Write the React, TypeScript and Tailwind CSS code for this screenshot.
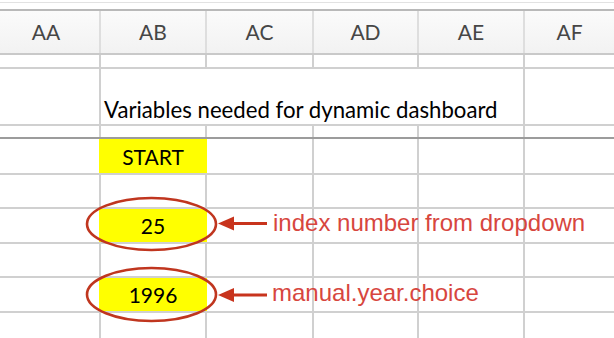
import React from "react";

const W = ["w-[101px]", "w-[106px]", "w-[107px]", "w-[105px]", "w-[106px]", "flex-1"];
const LINE = "border-[#d0d0d0]";

function Row({ h, dark, children }: { h: string; dark?: boolean; children: React.ReactNode }) {
  return (
    <div className={`flex ${h} border-b-2 ${dark ? "border-[#9c9c9c]" : LINE}`}>{children}</div>
  );
}

function Cell({ i, yellow, yellowEdge, children }: { i: number; yellow?: boolean; yellowEdge?: boolean; children?: React.ReactNode }) {
  const last = i === 5;
  const border = last ? "" : `border-r-2 ${yellowEdge || yellow ? "border-[#ffff00]" : LINE}`;
  return (
    <div
      className={`${W[i]} shrink-0 ${border} ${yellow ? "bg-[#ffff00]" : ""} flex items-center justify-center text-black`}
    >
      {children}
    </div>
  );
}

function Blank() {
  return (
    <>
      {[0, 1, 2, 3, 4, 5].map((i) => (
        <Cell key={i} i={i} />
      ))}
    </>
  );
}

function YellowRow({ label }: { label: string }) {
  return (
    <>
      <Cell i={0} yellowEdge />
      <Cell i={1} yellow>
        <span className="pt-[1px]">{label}</span>
      </Cell>
      <Cell i={2} />
      <Cell i={3} />
      <Cell i={4} />
      <Cell i={5} />
    </>
  );
}

export default function App() {
  const headers = ["AA", "AB", "AC", "AD", "AE", "AF"];
  return (
    <div
      className="relative w-[614px] h-[338px] overflow-hidden bg-white"
      style={{ fontFamily: "Lato, 'Open Sans', sans-serif" }}
    >
      {/* top strip */}
      <div className="h-[2px] bg-white" />
      <div className="h-px bg-[#e2e2e2]" />
      <div className="h-[6px] bg-white" />
      <div className="h-[2px] bg-[#b9b9b9]" />
      {/* header */}
      <div className="flex h-[44px] border-b-2 border-[#c9c9c9] bg-gradient-to-b from-[#fbfbfb] to-[#f2f2f2]">
        {headers.map((t, i) => (
          <div
            key={t}
            className={`${W[i]} shrink-0 ${i === 5 ? "" : "border-r-2 border-[#dedede]"} flex items-center justify-center ${i === 0 ? "pr-[7px]" : ""} text-[21px] text-[#464646]`}
          >
            {t}
          </div>
        ))}
      </div>
      <Row h="h-[14px]">
        <Blank />
      </Row>
      <Row h="h-[57px]">
        <Cell i={0} />
        <div className="w-[424px] shrink-0 border-r-2 border-[#d0d0d0] flex items-end pl-[3px] pb-[1px]">
          <span className="text-[22.2px] leading-[26px] whitespace-nowrap text-black">
            Variables needed for dynamic dashboard
          </span>
        </div>
        <Cell i={5} />
      </Row>
      <Row h="h-[13px]" dark>
        <Blank />
      </Row>
      <Row h="h-[36px]">
        <div className="contents text-[21px]">
          <YellowRow label="START" />
        </div>
      </Row>
      <Row h="h-[34px]">
        <Blank />
      </Row>
      <Row h="h-[35px]">
        <div className="contents text-[21px]">
          <YellowRow label="25" />
        </div>
      </Row>
      <Row h="h-[34px]">
        <Blank />
      </Row>
      <Row h="h-[35px]">
        <div className="contents text-[21px]">
          <YellowRow label="1996" />
        </div>
      </Row>
      <Row h="h-[40px]">
        <Blank />
      </Row>

      {/* annotations */}
      <svg className="absolute left-0 top-0 pointer-events-none" width="614" height="338" viewBox="0 0 614 338">
        <g fill="none" stroke="#c0361f" strokeWidth="2.6">
          <ellipse cx="151.5" cy="224" rx="64.5" ry="26" />
          <ellipse cx="151.5" cy="294.5" rx="64.5" ry="26.5" />
        </g>
        <g fill="#c8341d" stroke="none">
          <rect x="230" y="222" width="37" height="3" />
          <polygon points="218,223.5 234,216.5 234,230.5" />
          <rect x="230" y="293.5" width="37" height="3" />
          <polygon points="218,295 234,288 234,302" />
        </g>
      </svg>
      <span
        className="absolute left-[273px] top-[211px] text-[24px] leading-[24px] whitespace-nowrap text-[#d7463e]"
        style={{ fontFamily: "'Liberation Sans', Arial, sans-serif" }}
      >
        index number from dropdown
      </span>
      <span
        className="absolute left-[272px] top-[281px] text-[24px] leading-[24px] whitespace-nowrap text-[#d7463e]"
        style={{ fontFamily: "'Liberation Sans', Arial, sans-serif" }}
      >
        manual.year.choice
      </span>
    </div>
  );
}
